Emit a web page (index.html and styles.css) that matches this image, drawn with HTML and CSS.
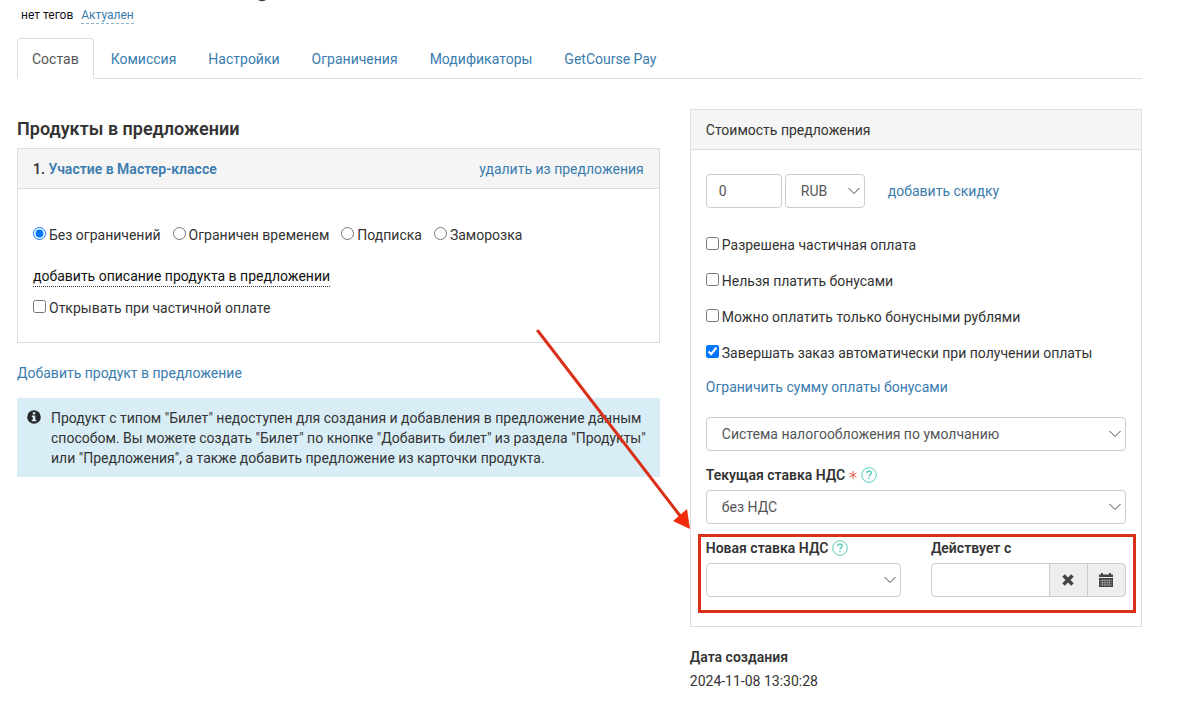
FILE: index.html
```html
<!DOCTYPE html>
<html lang="ru">
<head>
    <meta charset="UTF-8">
    <meta name="viewport" content="width=device-width, initial-scale=1.0">
    <title>Предложение</title>
    <link rel="stylesheet" href="styles.css">
</head>
<body>
    <svg class="title-tail" viewBox="0 0 8 2" aria-hidden="true"><path d="M0 0Q4 2.6 8 0" fill="#444"/></svg>
    <div class="tags">
        <span>нет тегов</span>
        <a href="#">Актуален</a>
    </div>
    <nav class="tabs">
        <a href="#" class="active">Состав</a>
        <a href="#">Комиссия</a>
        <a href="#">Настройки</a>
        <a href="#">Ограничения</a>
        <a href="#">Модификаторы</a>
        <a href="#">GetCourse Pay</a>
    </nav>

    <div class="row">
        <main class="col-main">
            <h2>Продукты в предложении</h2>
            <section class="panel">
                <div class="panel-heading">
                    <strong>1. <a href="#">Участие в Мастер-классе</a></strong>
                    <a href="#">удалить из предложения</a>
                </div>
                <div class="product-body">
                    <div class="radios">
                        <label class="check"><input type="radio" name="access" checked>Без ограничений</label>
                        <label class="check"><input type="radio" name="access">Ограничен временем</label>
                        <label class="check"><input type="radio" name="access">Подписка</label>
                        <label class="check"><input type="radio" name="access">Заморозка</label>
                    </div>
                    <a href="#" class="dotted">добавить описание продукта в предложении</a>
                    <label class="check"><input type="checkbox">Открывать при частичной оплате</label>
                </div>
            </section>
            <a href="#" class="add-product">Добавить продукт в предложение</a>
            <div class="alert">
                <svg class="info" viewBox="0 0 14 14" aria-hidden="true">
                    <circle cx="7" cy="7" r="6.8" fill="#26292c"/>
                    <path d="M5.8 2.2h2.5v2H5.8zM4.8 5.4h3.5v4.4h1v1.5H4.8V9.800h1V6.900h-1z" fill="#d9edf7"/>
                </svg>
                <p>Продукт с типом "Билет" недоступен для создания и добавления в предложение данным способом. Вы можете создать "Билет" по кнопке "Добавить билет" из раздела "Продукты" или "Предложения", а также добавить предложение из карточки продукта.</p>
            </div>
        </main>

        <aside class="col-side">
            <section class="panel">
                <div class="panel-heading">Стоимость предложения</div>
                <div class="price-body">
                    <div class="price-row">
                        <input type="text" class="control price" value="0" aria-label="Стоимость">
                        <div class="select currency">
                            <select class="control" aria-label="Валюта"><option>RUB</option></select>
                            <svg viewBox="0 0 12 8" aria-hidden="true"><path d="M.5 1L6 6.500 11.500 1"/></svg>
                        </div>
                        <a href="#">добавить скидку</a>
                    </div>
                    <div class="checks">
                        <label class="check"><input type="checkbox">Разрешена частичная оплата</label>
                        <label class="check"><input type="checkbox">Нельзя платить бонусами</label>
                        <label class="check"><input type="checkbox">Можно оплатить только бонусными рублями</label>
                        <label class="check"><input type="checkbox" checked>Завершать заказ автоматически при получении оплаты</label>
                    </div>
                    <a href="#" class="limit">Ограничить сумму оплаты бонусами</a>
                    <div class="select">
                        <select class="control" aria-label="Система налогообложения"><option>Система налогообложения по умолчанию</option></select>
                        <svg viewBox="0 0 12 8" aria-hidden="true"><path d="M.5 1L6 6.500 11.500 1"/></svg>
                    </div>
                    <div class="field">
                        <div class="field-label">
                            <label for="vat">Текущая ставка НДС</label>
                            <svg class="star" viewBox="0 0 8 8" aria-hidden="true"><path d="M4 0v8M.5 2l7 4M7.500 2l-7 4"/></svg>
                            <svg class="help" viewBox="0 0 16 16" aria-hidden="true"><circle cx="8" cy="8" r="7.300"/><path d="M5.700 6.300Q5.800 4 8 4T10.300 6.100C10.300 7.700 8 7.700 8 9.500M8 10.800v1.500" stroke-width="1.400"/></svg>
                        </div>
                        <div class="select">
                            <select class="control" id="vat"><option>без НДС</option></select>
                            <svg viewBox="0 0 12 8" aria-hidden="true"><path d="M.5 1L6 6.500 11.500 1"/></svg>
                        </div>
                    </div>
                    <div class="new-vat">
                        <div class="field">
                            <div class="field-label">
                                <label for="new-vat">Новая ставка НДС</label>
                                <svg class="help" viewBox="0 0 16 16" aria-hidden="true"><circle cx="8" cy="8" r="7.300"/><path d="M5.700 6.300Q5.800 4 8 4T10.300 6.100C10.300 7.700 8 7.700 8 9.500M8 10.800v1.500" stroke-width="1.400"/></svg>
                            </div>
                            <div class="select">
                                <select class="control" id="new-vat"><option></option></select>
                                <svg viewBox="0 0 12 8" aria-hidden="true"><path d="M.5 1L6 6.500 11.500 1"/></svg>
                            </div>
                        </div>
                        <div class="field">
                            <div class="field-label"><label for="from">Действует с</label></div>
                            <div class="date">
                                <input type="text" class="control" id="from">
                                <button type="button" aria-label="Очистить">
                                    <svg viewBox="0 0 14 14"><path d="M2.500 2.500l9 9M11.500 2.500l-9 9" stroke="#444" stroke-width="3.600"/></svg>
                                </button>
                                <button type="button" aria-label="Календарь">
                                    <svg viewBox="0 0 14 14"><path d="M0 1.500h2V0h2v1.500h6V0h2v1.500h2V4H0zM0 5h14v9H0z" fill="#444"/><path d="M1 7.500h12M1 9.700h12M1 11.900h12M3.500 6v7M5.800 6v7M8.200 6v7M10.500 6v7" stroke="#aaa" stroke-width=".6"/></svg>
                                </button>
                            </div>
                        </div>
                        <!-- рамка и стрелка поверх формы -->
                        <div class="frame"></div>
                        <svg class="arrow" viewBox="0 0 156 202" aria-hidden="true">
                            <path d="M3 3L146 189" stroke="#d9301a" stroke-width="3" stroke-linecap="round"/>
                            <path d="M155 201L138 193 152 181z" fill="#f02c0c"/>
                        </svg>
                    </div>
                </div>
            </section>
            <div class="created">
                <strong>Дата создания</strong>
                <span>2024-11-08 13:30:28</span>
            </div>
        </aside>
    </div>
</body>
</html>
```
FILE: styles.css
```css
* {
    box-sizing: border-box;
}
body {
    margin: 0;
    padding: 5px 58px 0 17px;
    font-family: Roboto, "Noto Sans", sans-serif;
    font-size: 14px;
    line-height: 20px;
    color: #333;
    background: #fff;
}
a {
    color: #3a7cae;
    text-decoration: none;
}
strong {
    font-weight: 600;
}
svg {
    fill: none;
    flex: none;
}
.title-tail {
    position: absolute;
    top: 0;
    left: 258px;
    width: 8px;
    height: 2px;
}
.tags {
    display: flex;
    align-items: baseline;
    gap: 8px;
    height: 20px;
    padding-left: 4px;
    font-size: 12px;
    color: #111;
}
.tags a {
    line-height: 16px;
    border-bottom: 1px dashed #8db3cf;
}
.tabs {
    display: flex;
    gap: 2px;
    margin-top: 13px;
    border-bottom: 1px solid #ddd;
}
.tabs a {
    padding: 10px 14px 9px;
    margin-bottom: -1px;
    border: 1px solid transparent;
    border-radius: 4px 4px 0 0;
}
.tabs a.active {
    color: #555;
    background: #fff;
    border-color: #ddd;
    border-bottom-color: #fff;
}
.row {
    display: flex;
    align-items: flex-start;
    margin: 30px -15px 0;
}
.col-main {
    width: 58.25%;
    padding: 0 15px;
}
.col-side {
    width: 41.75%;
    padding: 0 15px;
}
h2 {
    margin: 9px 0 8px;
    font-size: 18px;
    line-height: 22px;
    font-weight: 600;
}
.panel {
    border: 1px solid #ddd;
}
.panel-heading {
    display: flex;
    justify-content: space-between;
    padding: 10px 15px;
    height: 40px;
    background: #f5f5f5;
    border-bottom: 1px solid #ddd;
}
.product-body {
    display: flex;
    flex-direction: column;
    align-items: flex-start;
    padding: 36px 15px 24px;
}
.radios {
    display: flex;
    gap: 12px;
    margin-bottom: 22px;
}
.check {
    display: flex;
    align-items: flex-start;
}
.check input {
    flex: none;
    width: 13px;
    height: 13px;
    margin: 2px 3px 0 0;
}
.dotted {
    line-height: 19px;
    margin-bottom: 11px;
    color: #111;
    border-bottom: 1px dotted #333;
}
.add-product {
    display: block;
    margin: 20px 0 15px;
}
.alert {
    display: flex;
    gap: 10px;
    padding: 10px 10px 9px;
    background: #d9edf7;
}
.alert p {
    margin: 0;
}
.info {
    width: 14px;
    height: 14px;
    margin-top: 2px;
}
.price-body {
    padding: 24px 15px 29px;
}
.price-row {
    display: flex;
    align-items: center;
    gap: 3px;
}
.price-row a {
    margin-left: 20px;
}
.control {
    width: 100%;
    height: 34px;
    padding: 6px 12px;
    border: 1px solid #ccc;
    border-radius: 4px;
    background: #fff;
    font: inherit;
    color: #555;
}
.price {
    width: 76px;
}
.select {
    position: relative;
}
.select .control {
    appearance: none;
    display: block;
    padding-left: 15px;
}
.select svg {
    position: absolute;
    right: 5px;
    top: 13px;
    width: 12px;
    height: 8px;
    stroke: #444;
    pointer-events: none;
}
.currency {
    width: 80px;
}
.checks {
    display: flex;
    flex-direction: column;
    align-items: flex-start;
    gap: 16px;
    padding-top: 27px;
}
.limit {
    display: block;
    margin: 14px 0 20px;
}
.field-label {
    display: flex;
    align-items: center;
    gap: 4px;
    height: 24px;
    margin-bottom: 3px;
    font-weight: 600;
}
.field {
    padding-top: 12px;
}
.star {
    width: 8px;
    height: 8px;
    stroke: #e0604c;
}
.help {
    width: 16px;
    height: 16px;
    stroke: #56cdbb;
}
.new-vat {
    position: relative;
    display: grid;
    grid-template-columns: 1fr 1fr;
    gap: 30px;
}
.date {
    display: flex;
}
.date .control {
    flex: 1;
    min-width: 0;
    border-radius: 4px 0 0 4px;
}
.date button {
    display: flex;
    align-items: center;
    justify-content: center;
    width: 39px;
    margin-left: -1px;
    padding: 0;
    border: 1px solid #ccc;
    background: #eee;
}
.date button:last-child {
    border-radius: 0 4px 4px 0;
}
.date svg {
    width: 14px;
    height: 14px;
}
.frame {
    position: absolute;
    top: 10px;
    right: -10px;
    bottom: -16px;
    left: -8px;
    border: 3px solid #d9301a;
    pointer-events: none;
}
.arrow {
    position: absolute;
    right: calc(100% + 15px);
    bottom: 67px;
    width: 156px;
    height: 202px;
    pointer-events: none;
}
.created {
    display: flex;
    flex-direction: column;
    gap: 4px;
    margin-top: 20px;
}
```
